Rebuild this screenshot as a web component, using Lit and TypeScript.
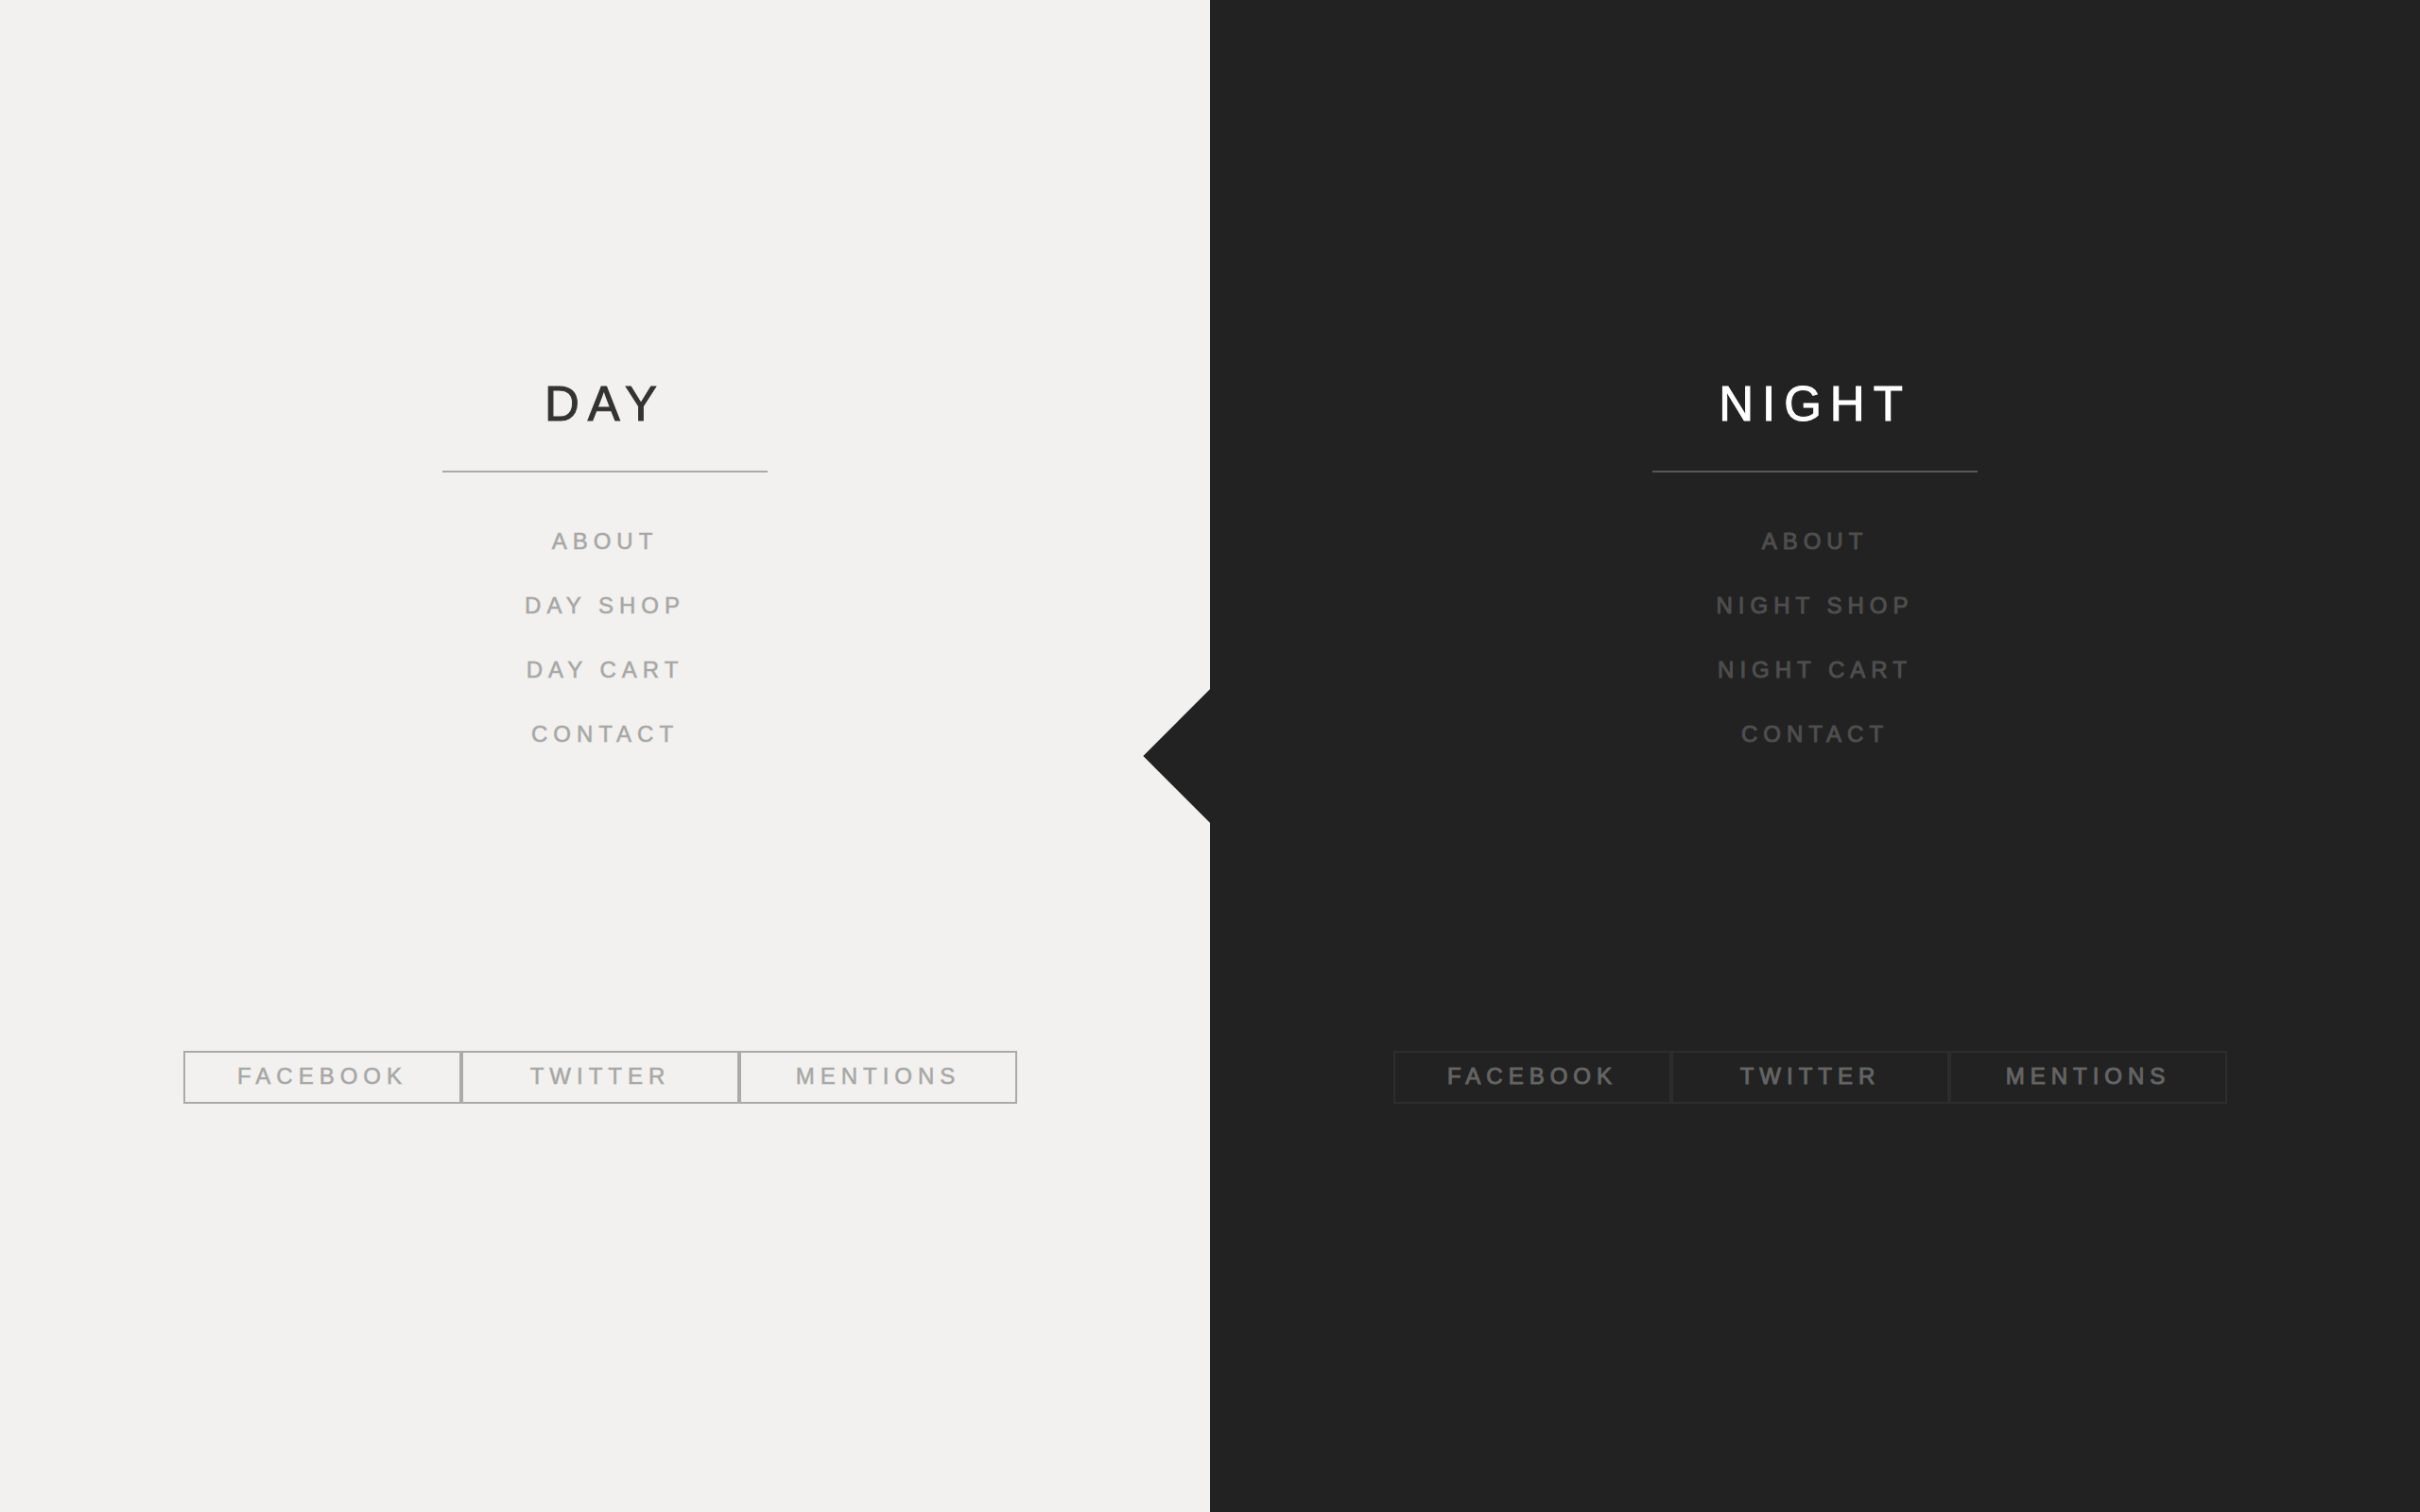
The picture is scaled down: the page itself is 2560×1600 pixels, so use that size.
import { LitElement, html, css } from "lit";
import { customElement, property } from "lit/decorators.js";
import { classMap } from "lit/directives/class-map.js";

interface Panel {
  theme: "day" | "night";
  title: string;
  menu: string[];
}

const PANELS: Panel[] = [
  { theme: "day", title: "DAY", menu: ["ABOUT", "DAY SHOP", "DAY CART", "CONTACT"] },
  { theme: "night", title: "NIGHT", menu: ["ABOUT", "NIGHT SHOP", "NIGHT CART", "CONTACT"] },
];

const SOCIAL = ["FACEBOOK", "TWITTER", "MENTIONS"];

@customElement("split-panel")
export class SplitPanel extends LitElement {
  @property({ attribute: false }) panel!: Panel;

  static styles = css`
    :host {
      display: flex;
      min-width: 0;
    }
    .panel {
      position: relative;
      flex: 1;
      min-width: 0;
      box-sizing: border-box;
      display: flex;
      flex-direction: column;
      align-items: center;
      justify-content: center;
      padding-bottom: 36px;
      font-family: "Liberation Sans", Arial, sans-serif;
      font-size: 24px;
      letter-spacing: 6px;
    }
    .day {
      --heading: #333333;
      --rule: #aaaaa8;
      --link: #a6a6a4;
      --link-edge: #a6a6a480;
      --social: #a6a6a4;
      --social-edge: #a6a6a480;
      --box: #aaaaa8;
      background: #f2f1ef;
    }
    .night {
      --heading: #ffffff;
      --rule: #585858;
      --link: #4e4e4e;
      --link-edge: #4e4e4e;
      --social: #646464;
      --social-edge: #646464;
      --box: #2d2d2d;
      background: #222222;
    }
    /* Square turned on its corner; its left half points into the other panel. */
    .night::before {
      content: "";
      position: absolute;
      top: 50%;
      left: 0;
      width: 100px;
      height: 100px;
      background: inherit;
      transform: translate(-50%, -50%) rotate(45deg);
    }
    .title {
      margin: 0;
      font-size: 51px;
      font-weight: 400;
      line-height: 64px;
      letter-spacing: 9px;
      color: var(--heading);
      -webkit-text-stroke: 1px var(--heading);
    }
    .rule {
      width: 344px;
      max-width: 100%;
      height: 2px;
      margin: 38px 0 39px;
      border: 0;
      background: var(--rule);
    }
    .menu,
    .social {
      margin: 0;
      padding: 0;
      list-style: none;
      text-align: center;
    }
    .menu {
      line-height: 68px;
    }
    .social {
      display: flex;
      margin-top: 301px;
      margin-right: 10px;
      line-height: 50px;
    }
    .link {
      color: var(--link);
      text-decoration: none;
      -webkit-text-stroke: 1px var(--link-edge);
    }
    .box {
      display: block;
      box-sizing: border-box;
      width: 294px;
      padding-bottom: 2px;
      border: 2px solid var(--box);
      color: var(--social);
      text-decoration: none;
      -webkit-text-stroke: 1px var(--social-edge);
    }
  `;

  render() {
    const { theme, title, menu } = this.panel;
    return html`
      <section class=${classMap({ panel: true, [theme]: true })}>
        <h1 class="title">${title}</h1>
        <hr class="rule" />
        <nav>
          <ul class="menu">
            ${menu.map((item) => html`<li><a class="link" href="#">${item}</a></li>`)}
          </ul>
        </nav>
        <ul class="social">
          ${SOCIAL.map((item) => html`<li><a class="box" href="#">${item}</a></li>`)}
        </ul>
      </section>
    `;
  }
}

@customElement("app-root")
export class AppRoot extends LitElement {
  static styles = css`
    :host {
      display: block;
    }
    .split {
      display: grid;
      grid-template-columns: 1fr 1fr;
      min-height: 100vh;
      overflow: hidden;
    }
  `;

  render() {
    return html`
      <main class="split">
        ${PANELS.map((panel) => html`<split-panel .panel=${panel}></split-panel>`)}
      </main>
    `;
  }
}
